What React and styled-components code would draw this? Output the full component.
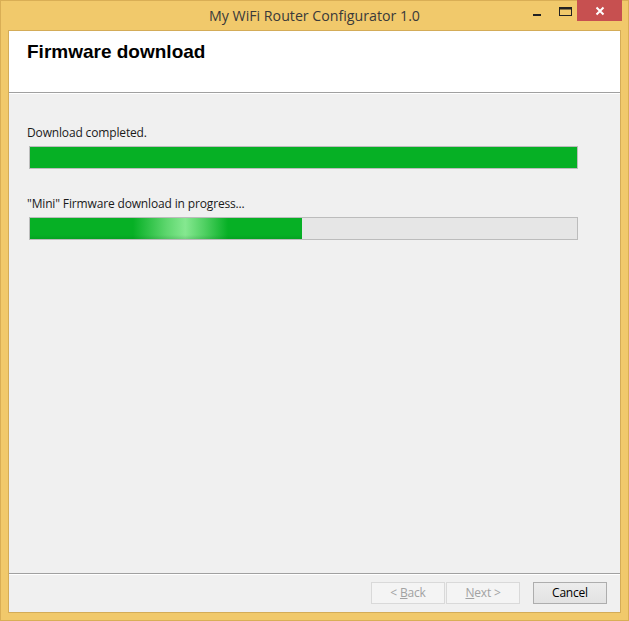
import React from "react";
import styled, { createGlobalStyle } from "styled-components";

const Global = createGlobalStyle`
  html, body { margin: 0; padding: 0; background: #F1C96B; }
  body { font-family: "Open Sans", "Liberation Sans", sans-serif; }
`;

const Frame = styled.div`
  width: 629px;
  height: 621px;
  box-sizing: border-box;
  background: #F1C96B;
  border: 1px solid #D9AE55;
  display: flex;
  flex-direction: column;
  padding: 0 7px 7px 7px;
`;

const TitleBar = styled.div`
  height: 29px;
  flex: none;
  display: flex;
  align-items: flex-start;
  position: relative;
`;

const Title = styled.div`
  flex: 1;
  text-align: center;
  font-family: "Open Sans", "Liberation Sans", sans-serif;
  font-size: 14.2px;
  color: #3a3a3a;
  line-height: 30px;
`;

const Controls = styled.div`
  position: absolute;
  right: -1px;
  top: -1px;
  display: flex;
  align-items: flex-start;
`;

const CtrlBtn = styled.div`
  width: ${(p) => p.$w}px;
  height: 21px;
  display: flex;
  align-items: center;
  justify-content: center;
  background: ${(p) => (p.$close ? "#C75050" : "transparent")};
`;

const Client = styled.div`
  flex: 1;
  border: 1px solid #D4AC58;
  background: #F0F0F0;
  display: flex;
  flex-direction: column;
  min-height: 0;
`;

const Header = styled.div`
  height: 62px;
  box-sizing: border-box;
  flex: none;
  background: #FFFFFF;
  border-bottom: 1px solid #A0A0A0;
  box-shadow: 0 1px 0 #FFFFFF;
  padding: 10px 0 0 18px;
`;

const Heading = styled.h1`
  margin: 0;
  font-family: "Liberation Sans", "Open Sans", sans-serif;
  font-weight: bold;
  font-size: 19px;
  color: #000;
  line-height: 22px;
`;

const Body = styled.div`
  flex: 1;
  padding: 32px 42px 0 18px;
  display: flex;
  flex-direction: column;
`;

const Label = styled.div`
  font-family: "Open Sans", "Liberation Sans", sans-serif;
  font-size: 12px;
  color: #1a1a1a;
  line-height: 16px;
  letter-spacing: -0.15px;
  margin-bottom: 5px;
`;

const Bar = styled.div`
  height: 21px;
  border: 1px solid #BCBCBC;
  background: #E6E6E6;
  margin-left: 2px;
  position: relative;
  overflow: hidden;
  margin-bottom: ${(p) => p.$mb || 0}px;
`;

const Fill = styled.div`
  height: 100%;
  background: #06B025;
  position: relative;
  overflow: hidden;
`;

const Glow = styled.div`
  position: absolute;
  top: 0;
  bottom: 0;
  left: 103px;
  width: 95px;
  background: linear-gradient(
    90deg,
    rgba(130, 230, 140, 0) 0%,
    rgba(130, 230, 140, 0.7) 35%,
    rgba(140, 235, 150, 0.95) 55%,
    rgba(130, 230, 140, 0.6) 75%,
    rgba(130, 230, 140, 0) 100%
  );
`;

const Shade = styled.div`
  position: absolute;
  left: 0;
  right: 0;
  bottom: 0;
  height: 4px;
  background: linear-gradient(180deg, rgba(0,0,0,0) 0%, rgba(0,80,20,0.15) 100%);
`;

const Footer = styled.div`
  flex: none;
  height: 39px;
  box-sizing: border-box;
  border-top: 1px solid #A0A0A0;
  box-shadow: inset 0 1px 0 #FFFFFF;
  display: flex;
  justify-content: flex-end;
  align-items: flex-start;
  padding: 8px 13px 0 0;
  gap: 1px;
`;

const Button = styled.button`
  width: 74px;
  height: 22px;
  box-sizing: border-box;
  font-family: "Open Sans", "Liberation Sans", sans-serif;
  font-size: 12px;
  letter-spacing: -0.2px;
  padding: 0;
  border: 1px solid ${(p) => (p.disabled ? "#D9D9D9" : "#ADADAD")};
  background: ${(p) =>
    p.disabled ? "#F4F4F4" : "linear-gradient(180deg, #ECECEC 0%, #E2E2E2 100%)"};
  color: ${(p) => (p.disabled ? "#A2A2A2" : "#000")};
  margin-left: ${(p) => p.$ml || 0}px;
  line-height: 20px;
  u { text-decoration: underline; }
`;

export default function App() {
  return (
    <>
      <Global />
      <Frame>
        <TitleBar>
          <Title>My WiFi Router Configurator 1.0</Title>
          <Controls>
            <CtrlBtn $w={26}>
              <svg width="10" height="3" viewBox="0 0 10 3" style={{ marginTop: 10, marginLeft: -2 }}>
                <rect x="1" y="0" width="8" height="2" fill="#222" />
              </svg>
            </CtrlBtn>
            <CtrlBtn $w={26}>
              <svg width="14" height="10" viewBox="0 0 14 10" style={{ marginTop: 2, marginLeft: 3 }}>
                <rect x="0.5" y="0.5" width="12" height="8" fill="none" stroke="#222" />
                <rect x="0.5" y="0.5" width="12" height="2" fill="#222" />
              </svg>
            </CtrlBtn>
            <CtrlBtn $w={45} $close>
              <svg width="10" height="10" viewBox="0 0 10 10" style={{ marginTop: 1 }}>
                <path d="M1.5 1.5 L8.5 8.5 M8.5 1.5 L1.5 8.5" stroke="#fff" strokeWidth="2" />
              </svg>
            </CtrlBtn>
          </Controls>
        </TitleBar>
        <Client>
          <Header>
            <Heading>Firmware download</Heading>
          </Header>
          <Body>
            <Label>Download completed.</Label>
            <Bar $mb={27}>
              <Fill style={{ width: "100%" }} />
            </Bar>
            <Label>"Mini" Firmware download in progress...</Label>
            <Bar>
              <Fill style={{ width: "49.8%" }}>
                <Glow />
                <Shade />
              </Fill>
            </Bar>
          </Body>
          <Footer>
            <Button disabled>
              &lt; <u>B</u>ack
            </Button>
            <Button disabled>
              <u>N</u>ext &gt;
            </Button>
            <Button $ml={12}>Cancel</Button>
          </Footer>
        </Client>
      </Frame>
    </>
  );
}
